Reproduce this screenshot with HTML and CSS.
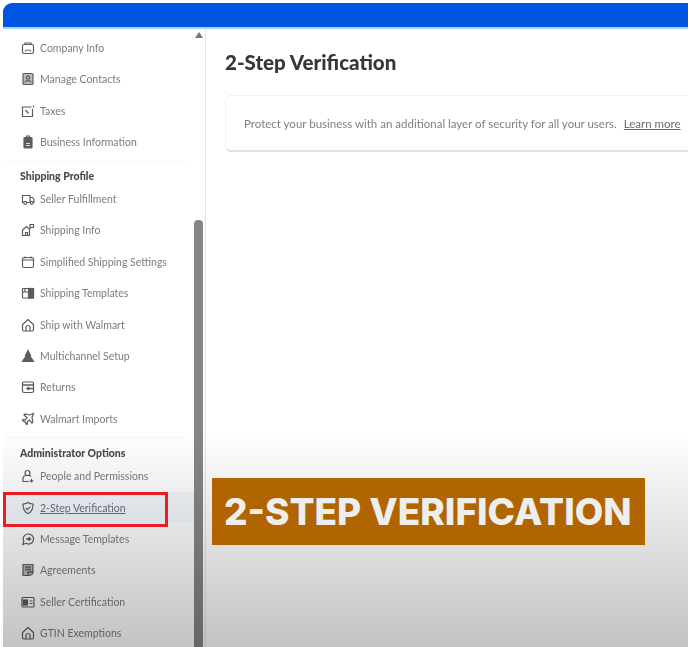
FILE: index.html
```html
<!DOCTYPE html>
<html lang="en">
<head>
  <meta charset="UTF-8">
  <title>2-Step Verification</title>
  <link rel="stylesheet" href="styles.css">
</head>
<body>
  <div class="app">
    <header class="top-bar"></header>

    <div class="content">
      <aside class="sidebar">
        <nav class="side-nav">
          <h4 class="nav-title">Partner Profile</h4>
          <a class="nav-item">
            <svg class="nav-icon" viewBox="0 0 14 14"><rect x="1.5" y="3.500" width="11" height="9" rx="1.500"/><path d="M4 3.500V2h6v1.500M4 10.500c1-2 5-2 6 0"/></svg>
            Company Info
          </a>
          <a class="nav-item">
            <svg class="nav-icon" viewBox="0 0 14 14"><rect x="2" y="1.500" width="10" height="11" rx="1" class="soft"/><circle cx="7" cy="5.500" r="1.600"/><path d="M4 10.500c.6-2.400 5.400-2.400 6 0"/></svg>
            Manage Contacts
          </a>
          <a class="nav-item">
            <svg class="nav-icon" viewBox="0 0 14 14"><path d="M10.500 3H1.500v9.500h10V5"/><path d="M4.500 6l3 3.500M4.600 9.500h.2M7.200 6h.2M12.500 1.500v2"/></svg>
            Taxes
          </a>
          <a class="nav-item">
            <svg class="nav-icon" viewBox="0 0 14 14"><rect x="3" y="2.500" width="8" height="10.500" rx="1" class="solid"/><path d="M5.500 2.500V1h3v1.500"/><path d="M5 8.500h4M5 10.500h4" class="light"/></svg>
            Business Information
          </a>

          <div class="nav-rule"></div>
          <h4 class="nav-title">Shipping Profile</h4>
          <a class="nav-item">
            <svg class="nav-icon" viewBox="0 0 14 14"><path d="M2.500 10.500H1.500v-7h7.500v7H6M9 5.500h2.500l1.500 2v3h-1M9 10.500h.5"/><circle cx="4.200" cy="10.800" r="1.500"/><circle cx="10.700" cy="10.800" r="1.500"/></svg>
            Seller Fulfillment
          </a>
          <a class="nav-item">
            <svg class="nav-icon" viewBox="0 0 14 14"><path d="M1.500 7l4-3.500 3 2.500v6.500h-7zM4.500 12.500V9.500h2v3"/><path d="M9 6V1.500h3.500v3H9"/></svg>
            Shipping Info
          </a>
          <a class="nav-item">
            <svg class="nav-icon" viewBox="0 0 14 14"><rect x="1.500" y="2.500" width="11" height="10" rx="1.500"/><path d="M1.500 5h11M4 1.500v2M10 1.500v2"/></svg>
            Simplified Shipping Settings
          </a>
          <a class="nav-item">
            <svg class="nav-icon" viewBox="0 0 14 14"><rect x="1.500" y="2.500" width="11" height="9.500" rx="1"/><rect x="7.500" y="2.500" width="5" height="9.500" class="solid"/><path d="M1.500 6h6M4 2.500V6"/></svg>
            Shipping Templates
          </a>
          <a class="nav-item">
            <svg class="nav-icon" viewBox="0 0 14 14"><path d="M7 1.500l5.500 5v5a1.500 1.500 0 0 1-1.500 1.500H3a1.500 1.500 0 0 1-1.500-1.500v-5z"/><path d="M5 13V9.500a2 2 0 0 1 4 0V13"/></svg>
            Ship with Walmart
          </a>
          <a class="nav-item">
            <svg class="nav-icon" viewBox="0 0 14 14"><path d="M7 1.500l2.500 5h-1l4 6h-11l4-6h-1z" class="solid"/></svg>
            Multichannel Setup
          </a>
          <a class="nav-item">
            <svg class="nav-icon" viewBox="0 0 14 14"><rect x="1.500" y="2" width="11" height="10.500" rx="1.500"/><path d="M1.500 5h11M6 8.500h6M8 7l-2 1.500 2 1.500" class="thick"/></svg>
            Returns
          </a>
          <a class="nav-item">
            <svg class="nav-icon" viewBox="0 0 14 14"><path d="M12.500 1.500L8.500 3 4 2 3 3l3 2.500-2 2.500-2-.500-.500 1 2.500 1.500L5.500 12.500l1-.500-.500-2 2.500-2 2.500 3 1-1-1-4.500z"/></svg>
            Walmart Imports
          </a>

          <div class="nav-rule wide"></div>
          <h4 class="nav-title">Administrator Options</h4>
          <a class="nav-item">
            <svg class="nav-icon" viewBox="0 0 14 14"><circle cx="6.500" cy="4" r="2.500"/><path d="M8 12.500H2v-3a3 3 0 0 1 3-3h3a3 3 0 0 1 2 1M10.500 10v3.500M8.800 11.800h3.500"/></svg>
            People and Permissions
          </a>
          <a class="nav-item active">
            <svg class="nav-icon" viewBox="0 0 14 14"><path d="M7 1.500c1.500 1 3 1.500 5 1.500 0 5-1 8-5 9.500C3 11 2 8 2 3c2 0 3.500-.500 5-1.500z"/><path d="M4.800 7l1.600 1.600 3-3"/></svg>
            <span class="nav-link">2-Step Verification</span>
          </a>
          <a class="nav-item">
            <svg class="nav-icon" viewBox="0 0 14 14"><path d="M7.500 2a5 5 0 1 1-2.500 9.300L1.800 12.500l1-3A5 5 0 0 1 7.500 2z"/><path d="M5 7h4.500M7.500 5.300L9.500 7 7.500 8.700" class="thick"/></svg>
            Message Templates
          </a>
          <a class="nav-item">
            <svg class="nav-icon" viewBox="0 0 14 14"><path d="M2 1.500h10v7.500c0 2-2 3.500-5 3.500h-5z" class="soft"/><path d="M4 4h6M4 6.500h6M7 12.500V9h5" class="thick"/></svg>
            Agreements
          </a>
          <a class="nav-item">
            <svg class="nav-icon" viewBox="0 0 14 14"><rect x="1" y="2.500" width="12" height="9.500" rx="1"/><rect x="2.500" y="5" width="4" height="5" class="solid"/><path d="M8.500 6h3M8.500 8.500h3"/></svg>
            Seller Certification
          </a>
          <a class="nav-item">
            <svg class="nav-icon" viewBox="0 0 14 14"><path d="M7 1.500l5.500 5v5a1.500 1.500 0 0 1-1.500 1.500H3a1.500 1.500 0 0 1-1.500-1.500v-5z"/><path d="M5 13V9.500a2 2 0 0 1 4 0V13"/></svg>
            GTIN Exemptions
          </a>
        </nav>

        <div class="scrollbar">
          <div class="scroll-arrow"></div>
          <div class="scroll-thumb"></div>
        </div>
      </aside>

      <main class="panel">
        <h1 class="panel-title">2-Step Verification</h1>
        <div class="info-card">
          <span>Protect your business with an additional layer of security for all your users.</span>
          <a class="learn-more">Learn more</a>
        </div>
      </main>
    </div>

    <!-- video fade at the bottom of the frame -->
    <div class="fade"></div>
    <div class="highlight-box"></div>
    <div class="caption">2-STEP VERIFICATION</div>
  </div>
</body>
</html>
```

FILE: styles.css
```css
* {
  margin: 0;
  padding: 0;
  box-sizing: border-box;
}

html,
body {
  height: 647px;
  overflow: hidden;
  background: #fff;
}

body {
  padding: 3px 0 0 3px;
  font-family: 'Lato', 'Liberation Sans', sans-serif;
}

.app {
  position: relative;
  height: 644px;
  display: flex;
  flex-direction: column;
  overflow: hidden;
}

.top-bar {
  position: relative;
  z-index: 2;
  flex: none;
  height: 26px;
  background: #0255e2;
  border-bottom: 2px solid #a5d8f7;
  border-top-left-radius: 9px;
}

.content {
  flex: 1;
  min-height: 0;
  display: flex;
}

/* Sidebar */
.sidebar {
  flex: none;
  width: 203px;
  display: flex;
  border-right: 1px solid #e6e6e6;
  filter: blur(0.5px);
}

.side-nav {
  flex: 1;
  min-width: 0;
  margin-top: -11.5px;
}

.nav-title {
  height: 14.6px;
  line-height: 14.6px;
  padding-left: 17px;
  font-size: 10.5px;
  font-weight: 900;
  color: #484848;
}

.nav-rule {
  height: 11px;
  margin-right: 8px;
  border-top: 1px solid #f8f8f8;
  transform: translateY(3px);
}

.nav-rule.wide {
  height: 11.5px;
}

.nav-item {
  height: 31.4px;
  display: flex;
  align-items: center;
  gap: 5px;
  padding-left: 18px;
  font-size: 10.5px;
  color: #7c7c7c;
  white-space: nowrap;
}

.nav-item.active {
  background: #f4f8fd;
}

.nav-link {
  color: #66707f;
  text-decoration: underline;
}

.nav-icon {
  flex: none;
  width: 14px;
  height: 14px;
  fill: none;
  stroke: #5c5c5c;
  stroke-width: 1.2;
}

.nav-icon .soft {
  fill: #bbb;
}

.nav-icon .solid {
  fill: #5c5c5c;
}

.nav-icon .light {
  stroke: #ddd;
}

.nav-icon .thick {
  stroke-width: 1.4;
}

.scrollbar {
  flex: none;
  width: 9px;
  margin-right: 2px;
  display: flex;
  flex-direction: column;
  align-items: center;
}

.scroll-arrow {
  margin-top: 3px;
  border-left: 4px solid transparent;
  border-right: 4px solid transparent;
  border-bottom: 6px solid #777;
}

.scroll-thumb {
  width: 100%;
  flex: 1;
  margin-top: 182px;
  background: #868686;
  border-radius: 4px 4px 0 0;
}

/* Main panel */
.panel {
  flex: 1;
  min-width: 0;
  padding: 20px 0 0 19px;
  filter: blur(0.5px);
}

.panel-title {
  font-size: 20.5px;
  font-weight: 900;
  line-height: 26px;
  color: #363636;
}

.info-card {
  width: 480px;
  height: 57px;
  margin-top: 20px;
  display: flex;
  align-items: center;
  gap: 7px;
  padding-left: 18px;
  font-size: 11.5px;
  color: #808080;
  white-space: nowrap;
  border: 1px solid #f0f0f0;
  border-bottom: 2px solid #e2e2e2;
  border-radius: 6px;
}

.learn-more {
  color: #6a6a6a;
  text-decoration: underline;
}

/* Things laid over the recording */
.fade {
  position: absolute;
  left: 0;
  right: 0;
  bottom: 0;
  height: 217px;
  background: linear-gradient(rgba(0, 0, 0, 0), rgba(0, 0, 0, 0.235));
}

.highlight-box {
  position: absolute;
  left: 0;
  top: 489px;
  width: 165px;
  height: 35px;
  border: 3px solid #ed1c24;
}

.caption {
  position: absolute;
  left: 209px;
  top: 475px;
  width: 433px;
  height: 67px;
  padding-left: 12px;
  font-family: 'Inter', 'Liberation Sans', sans-serif;
  font-size: 37px;
  font-weight: 800;
  line-height: 67px;
  color: #eeeeee;
  background: #b06500;
  white-space: nowrap;
}
```
